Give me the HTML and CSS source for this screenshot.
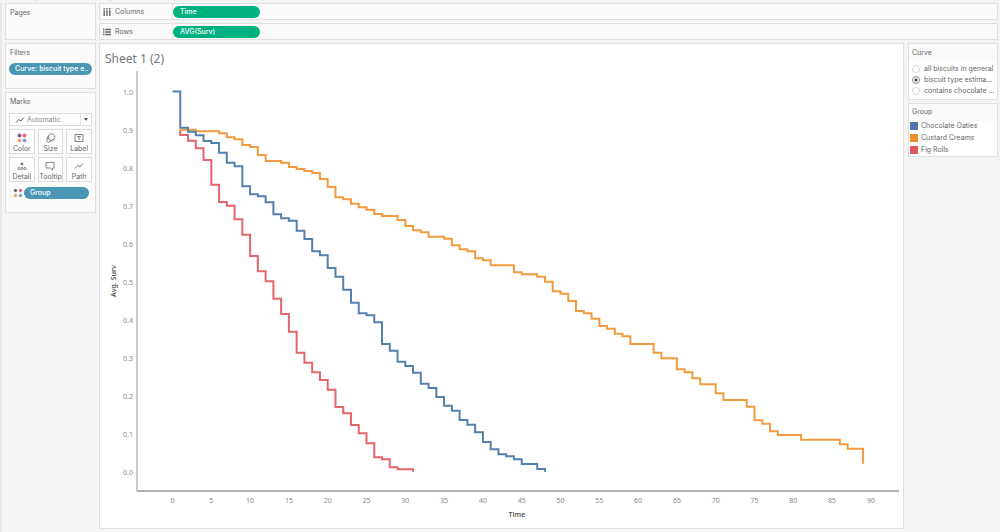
FILE: index.html
```html
<!DOCTYPE html>
<html lang="en">
<head>
<meta charset="utf-8">
<title>Sheet 1 (2)</title>
<link rel="stylesheet" href="styles.css">
</head>
<body>
<div class="toolbar-edge"><i></i><i></i><i></i></div>
<div class="workbook">
  <aside class="sidebar">
    <section class="card pages"><h2>Pages</h2></section>
    <section class="card filters">
      <h2>Filters</h2>
      <button class="pill pill-blue">Curve: biscuit type e..</button>
    </section>
    <section class="card marks">
      <h2>Marks</h2>
      <div class="mark-type">
        <svg class="mark-icon" viewBox="0 0 10 8"><path d="M1 6.5 3.5 3.5 6 5 9 1.5"/></svg>
        <select aria-label="Mark type"><option>Automatic</option></select>
        <span class="arrow"></span>
      </div>
      <div class="mark-grid">
        <button class="mark"><svg viewBox="0 0 12 12"><g class="dots"><circle class="c1" cx="3.5" cy="3.5" r="2"/><circle class="c2" cx="8.5" cy="3.5" r="2"/><circle class="c3" cx="3.5" cy="8.5" r="2"/><circle class="c4" cx="8.5" cy="8.5" r="2"/></g></svg>Color</button>
        <button class="mark"><svg viewBox="0 0 12 12"><path d="M4.6 6.5A3.3 3.3 0 1 1 7 8.3M4.5 6.6a1.8 1.8 0 1 0 .1 3.6 1.8 1.8 0 0 0-.1-3.6M6 9.8 9.7 6.8M2.8 7 4.6 3.4"/></svg>Size</button>
        <button class="mark"><svg viewBox="0 0 12 12"><path d="M2 2.5H10V9.5H2ZM4 4.5H8M6 4.5V8"/></svg>Label</button>
        <button class="mark"><svg viewBox="0 0 12 12"><circle class="solid" cx="6" cy="4" r="1"/><circle cx="3" cy="8.500" r="1.1"/><circle cx="6" cy="8.5" r="1.1"/><circle cx="9" cy="8.5" r="1.1"/></svg>Detail</button>
        <button class="mark"><svg viewBox="0 0 12 12"><path d="M2 2.5H10V8H8.5V10L6.3 8H2Z"/></svg>Tooltip</button>
        <button class="mark"><svg viewBox="0 0 12 12"><path d="M2 8.5 4.7 5.5 7 7 10 3.5"/></svg>Path</button>
      </div>
      <div class="encoding">
        <svg viewBox="0 0 12 12"><g class="dots"><circle class="c1" cx="3" cy="3" r="2"/><circle class="c2" cx="9" cy="3" r="2"/><circle class="c3" cx="3" cy="9" r="2"/><circle class="c4" cx="9" cy="9" r="2"/></g></svg>
        <button class="pill pill-blue">Group</button>
      </div>
    </section>
  </aside>

  <div class="content">
    <div class="shelf">
      <div class="shelf-name"><svg viewBox="0 0 8 8"><path d="M1.2 0V1.4M4 0V1.4M6.8 0V1.4M1.2 2.2V8M4 2.2V8M6.8 2.2V8"/></svg>Columns</div>
      <button class="pill pill-green">Time</button>
    </div>
    <div class="shelf">
      <div class="shelf-name"><svg viewBox="0 0 8 8"><path d="M0 1.5H1.4M0 4H1.4M0 6.5H1.4M2.200 1.5H8M2.2 4H8M2.2 6.5H8"/></svg>Rows</div>
      <button class="pill pill-green">AVG(Surv)</button>
    </div>
    <div class="lower">
      <main class="view">
        <h1>Sheet 1 (2)</h1>
        <svg class="chart" viewBox="100 69 803 459" role="img" aria-label="Average survival over time by group">
          <path class="axis-y" d="M137 71V491"/>
          <path class="axis-x" d="M137 491H899"/>
          <g id="y-ticks" class="tick tick-y"></g>
          <g id="x-ticks" class="tick tick-x"></g>
          <g id="series"></g>
          <text class="axis-title" transform="translate(116 281) rotate(-90)">Avg. Surv</text>
          <text class="axis-title" x="517" y="517">Time</text>
        </svg>
      </main>
      <aside class="legends">
        <fieldset class="card curve">
          <legend>Curve</legend>
          <label><input type="radio" name="curve">all biscuits in general</label>
          <label><input type="radio" name="curve" checked>biscuit type estima...</label>
          <label><input type="radio" name="curve">contains chocolate ...</label>
        </fieldset>
        <section class="card group">
          <h2>Group</h2>
          <ul>
            <li><span class="swatch oaties"></span>Chocolate Oaties</li>
            <li><span class="swatch creams"></span>Custard Creams</li>
            <li><span class="swatch rolls"></span>Fig Rolls</li>
          </ul>
        </section>
      </aside>
    </div>
  </div>
</div>
<script src="chart.js"></script>
</body>
</html>
```
FILE: styles.css
```css
* { box-sizing: border-box; }
body {
  margin: 0;
  min-height: 100vh;
  display: flex;
  flex-direction: column;
  background: #f4f4f4;
  color: #666;
  font: 7px/10px Inter, "Liberation Sans", sans-serif;
}
h1, h2, ul { margin: 0; padding: 0; font-weight: 400; }
button, select { font: inherit; color: inherit; }
svg { fill: none; stroke: #666; flex: none; }

.toolbar-edge { height: 3px; display: flex; padding-left: 36px; }
.toolbar-edge i { width: 74px; height: 2px; border-left: 1px solid #dcdcdc; }
.toolbar-edge i:nth-child(2) { width: 64px; }

.workbook {
  flex: 1;
  display: grid;
  grid-template-columns: 91px 1fr;
  gap: 3px;
  padding: 0 2px 3px 3px;
  border-left: 2px solid #e9e9e9;
}
.card { background: #fafafa; border: 1px solid #e0e0e0; }
.card h2 { font-size: 7px; line-height: 10px; }

.sidebar { display: flex; flex-direction: column; gap: 3px; }
.sidebar .card { padding: 4px 3px; }
.sidebar h2 { padding-left: 1px; }
.pages { height: 37px; }
.filters { height: 46px; }
.filters .pill { width: 100%; margin-top: 5px; }
.marks { height: 121px; }

.pill {
  display: block;
  height: 12px;
  padding: 0 6px;
  border: 0;
  border-radius: 6px;
  color: #fff;
  font-weight: 500;
  line-height: 12px;
  text-align: left;
  white-space: nowrap;
}
.pill-blue { background: #4996b2; }
.pill-green { background: #00b180; width: 87px; padding-left: 7px; }

.mark-type {
  display: flex;
  align-items: center;
  height: 13px;
  margin-top: 6px;
  border: 1px solid #dcdcdc;
  background: #fff;
}
.mark-icon { width: 10px; height: 8px; margin-left: 5px; }
.mark-type select {
  flex: 1;
  min-width: 0;
  padding: 0 0 0 2px;
  border: 0;
  background: none;
  appearance: none;
  color: #888;
}
.arrow {
  width: 11px;
  height: 11px;
  border-left: 1px solid #e0e0e0;
  display: grid;
  place-items: center;
}
.arrow::after {
  content: "";
  border: 2px solid transparent;
  border-top: 3px solid #555;
  border-bottom: 0;
}
.mark-grid { display: grid; grid-template-columns: repeat(3, 1fr); gap: 3px; margin-top: 3px; }
.mark {
  display: flex;
  flex-direction: column;
  align-items: center;
  min-width: 0;
  height: 25px;
  padding: 2px 0 0;
  border: 1px solid #dcdcdc;
  background: #fdfdfd;
}
.mark svg { width: 12px; height: 12px; stroke-width: 0.8; }
.solid { fill: #555; }
.dots { stroke: none; }
.c1 { fill: #76608a; }
.c2 { fill: #f2617a; }
.c3 { fill: #f0a078; }
.c4 { fill: #7f9fcf; }
.encoding { display: flex; align-items: center; gap: 1px; margin: 5px 3px 0 4px; }
.encoding svg { width: 10px; height: 10px; }
.encoding .pill { flex: 1; }

.content { display: flex; flex-direction: column; gap: 3px; min-width: 0; }
.shelf {
  display: flex;
  align-items: center;
  height: 17px;
  border: 1px solid #e0e0e0;
  background: #fafafa;
}
.shelf-name {
  display: flex;
  align-items: center;
  gap: 4px;
  width: 73px;
  height: 100%;
  padding-left: 3px;
  border-right: 1px solid #e4e4e4;
}
.shelf-name svg { width: 8px; height: 8px; stroke-width: 1.4; }

.lower { flex: 1; display: grid; grid-template-columns: 1fr 90px; gap: 4px; }
.view {
  display: flex;
  flex-direction: column;
  min-width: 0;
  border: 1px solid #e0e0e0;
  background: #fff;
}
.view h1 {
  height: 25px;
  padding: 6px 5px 0;
  font: 400 12px/18px "Noto Sans", "Open Sans", sans-serif;
  color: #777;
}
.chart { flex: 1; width: 100%; min-height: 0; }
.chart text { stroke: none; font: 7px "Noto Sans", "Open Sans", sans-serif; }
.axis-y { stroke: #c8c8c8; stroke-width: 2; }
.axis-x { stroke: #b0b0b0; stroke-width: 2; }
.tick { fill: #888; }
.tick-y { text-anchor: end; }
.tick-x { text-anchor: middle; }
.chart .axis-title { fill: #555; font-weight: 600; text-anchor: middle; }
.line { stroke-width: 2; stroke-linejoin: miter; }
.line-oaties { stroke: #5580ae; }
.line-creams { stroke: #f39a3e; }
.line-rolls { stroke: #e4666a; }

.legends { display: flex; flex-direction: column; gap: 3px; }
.curve, .group { background: linear-gradient(#fafafa 17px, #fff 17px); }
.curve { min-width: 0; height: 57px; margin: 0; padding: 0 0 0 3px; }
.curve legend { float: left; width: 100%; padding: 4px 0 5px; line-height: 10px; }
.curve label { clear: both; display: flex; align-items: center; gap: 4px; height: 11px; white-space: nowrap; }
.curve input {
  appearance: none;
  flex: none;
  width: 8px;
  height: 8px;
  margin: 0;
  border: 1px solid #d8d8d8;
  border-radius: 50%;
  background: #fff;
}
.curve input:checked { border-color: #888; background: radial-gradient(#444 0 1px, #fff 2px); }
.group { height: 54px; }
.group h2 { padding: 3px 3px; }
.group ul { list-style: none; padding: 0 1px 1px; }
.group li { display: flex; align-items: center; gap: 3px; height: 12px; }
.swatch { width: 8px; height: 8px; }
.oaties { background: #4e79a7; }
.creams { background: #f28e2b; }
.rolls { background: #e15759; }
```
FILE: chart.js
```js
const NS = "http://www.w3.org/2000/svg";
const x = t => 172.5 + 7.76 * t;
const y = v => 471.5 - 380 * v;

// Each entry: [time, height of the step that starts there]
const series = {
  rolls: [[1,129.7],[1,135],[2,140.7],[3,148.3],[4,160],[5,184.7],[6,202],[7,205.7],[8,219.3],[9,234.7],[10,256],[11,271.3],[12,281.3],[13,298.7],[14,314],[15,331.7],[16,352.7],[17,362.7],[18,372.3],[19,380],[20,389.7],[21,407],[22,413.3],[23,425],[24,433.3],[25,443.3],[26,457.3],[27,459.3],[28,467.3],[29,469.3],[31,471.7]],
  creams: [[1,129.7],[3,131.3],[6,133.3],[7,137.3],[8,139.3],[9,145],[10,147],[11,155],[12,161],[14,162.7],[15,167],[16,169],[17,171],[18,173],[19,179],[20,187],[21,197.3],[22,199.3],[23,203.7],[24,207.3],[25,209.7],[26,214],[27,216],[29,220],[30,226],[31,230.3],[32,232.3],[33,236.7],[35,238.7],[36,245.3],[37,249.3],[38,251.3],[39,258.3],[40,260.3],[41,265.3],[44,272.3],[45,274.3],[47,276.7],[48,281.7],[49,291.3],[50,293.7],[51,301],[52,311],[53,313.3],[54,318.7],[55,326],[56,328.7],[57,333.7],[58,336.3],[59,344],[62,352.7],[63,358.3],[65,369.3],[66,372.3],[67,378.3],[68,384.3],[70,393.3],[71,400],[74,406.7],[75,420.3],[76,423.7],[77,431.3],[78,435],[81,439.7],[86,444.3],[87,448.7],[89,463.7]],
  oaties: [[0,91.5],[1,127.7],[2,131.7],[3,135.3],[4,141],[5,143],[6,152.7],[7,162.7],[8,166.3],[9,186.3],[10,194.3],[11,196.3],[12,202.3],[13,214.3],[14,218.3],[15,220.7],[16,230.7],[17,239],[18,251.3],[19,255.3],[20,268],[21,276.7],[22,289.7],[23,302.7],[24,313.3],[25,315.3],[26,322.3],[27,344],[28,350.7],[29,361.7],[30,366],[31,372.7],[32,383.7],[33,388],[34,397],[35,405.7],[36,410.7],[37,420],[38,424.7],[39,432.3],[40,442],[41,449.3],[42,454.3],[43,456.3],[44,459.3],[45,464],[47,469],[48,471.7]]
};

function add(parentId, tag, attrs, text) {
  const el = document.createElementNS(NS, tag);
  for (const k in attrs) el.setAttribute(k, attrs[k]);
  if (text !== undefined) el.textContent = text;
  document.getElementById(parentId).append(el);
}

for (const [name, steps] of Object.entries(series)) {
  const [first, ...rest] = steps;
  const d = `M${x(first[0])} ${first[1]}` + rest.map(([t, h]) => `H${x(t)}V${h}`).join("");
  add("series", "path", { d, class: `line line-${name}` });
}
for (let i = 0; i <= 10; i++) {
  add("y-ticks", "text", { x: 133, y: y(i / 10) + 3 }, (i / 10).toFixed(1));
}
for (let t = 0; t <= 90; t += 5) {
  add("x-ticks", "text", { x: x(t), y: 503 }, t);
}
```
